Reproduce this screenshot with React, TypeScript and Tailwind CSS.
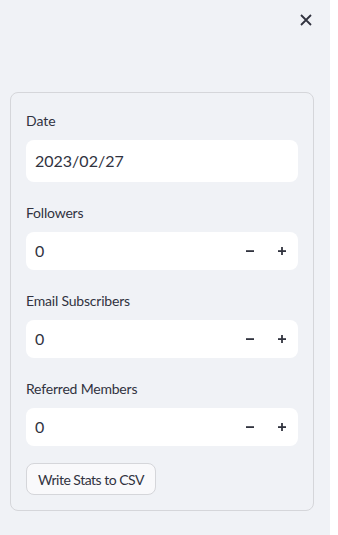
import React from "react";

const font = { fontFamily: '"Source Sans Pro", Lato, "Noto Sans", sans-serif' };

function NumberField({ label }: { label: string }) {
  return (
    <div className="flex flex-col">
      <label className="h-6 flex items-center text-[14px] text-[#31333f] tracking-[-0.2px]">{label}</label>
      <div className="mt-2 h-[38px] flex items-center bg-white rounded-lg">
        <span className="flex-1 pl-[9px] text-[16px] text-[#31333f]">0</span>
        <button className="w-8 h-full flex items-center justify-center text-[#31333f]">
          <svg width="10" height="10" viewBox="0 0 10 10">
            <rect x="1" y="4.2" width="8" height="1.8" fill="#31333f" />
          </svg>
        </button>
        <button className="w-8 h-full flex items-center justify-center text-[#31333f]">
          <svg width="10" height="10" viewBox="0 0 10 10">
            <rect x="1" y="4.2" width="8" height="1.8" fill="#31333f" />
            <rect x="4.1" y="1" width="1.8" height="8" fill="#31333f" />
          </svg>
        </button>
      </div>
    </div>
  );
}

export default function App() {
  return (
    <div className="w-[338px] h-[535px] bg-white flex" style={font}>
      <div className="w-[330px] h-full bg-[#f0f2f6] flex flex-col">
        <div className="h-[92px] flex justify-end items-start pt-[14px] pr-[18px]">
          <svg width="12" height="12" viewBox="0 0 12 12">
            <path d="M1 1 L11 11 M11 1 L1 11" stroke="#31333f" strokeWidth="1.8" />
          </svg>
        </div>
        <div className="ml-[10px] w-[304px] border border-[#d5d6da] rounded-lg p-[15px] flex flex-col">
          <div className="flex flex-col">
            <label className="h-6 flex items-center text-[14px] text-[#31333f]">Date</label>
            <div className="mt-2 h-[42px] flex items-center bg-white rounded-lg pl-[9px] text-[16px] text-[#31333f]">
              2023/02/27
            </div>
          </div>
          <div className="mt-[18px]">
            <NumberField label="Followers" />
          </div>
          <div className="mt-[18px]">
            <NumberField label="Email Subscribers" />
          </div>
          <div className="mt-[18px]">
            <NumberField label="Referred Members" />
          </div>
          <div className="mt-[17px]">
            <button className="h-8 w-[130px] bg-[#f9f9fb] border border-[#d5d6da] rounded-lg text-[14px] text-[#31333f] tracking-[-0.5px] flex items-center justify-center whitespace-nowrap">
              Write Stats to CSV
            </button>
          </div>
        </div>
      </div>
    </div>
  );
}
